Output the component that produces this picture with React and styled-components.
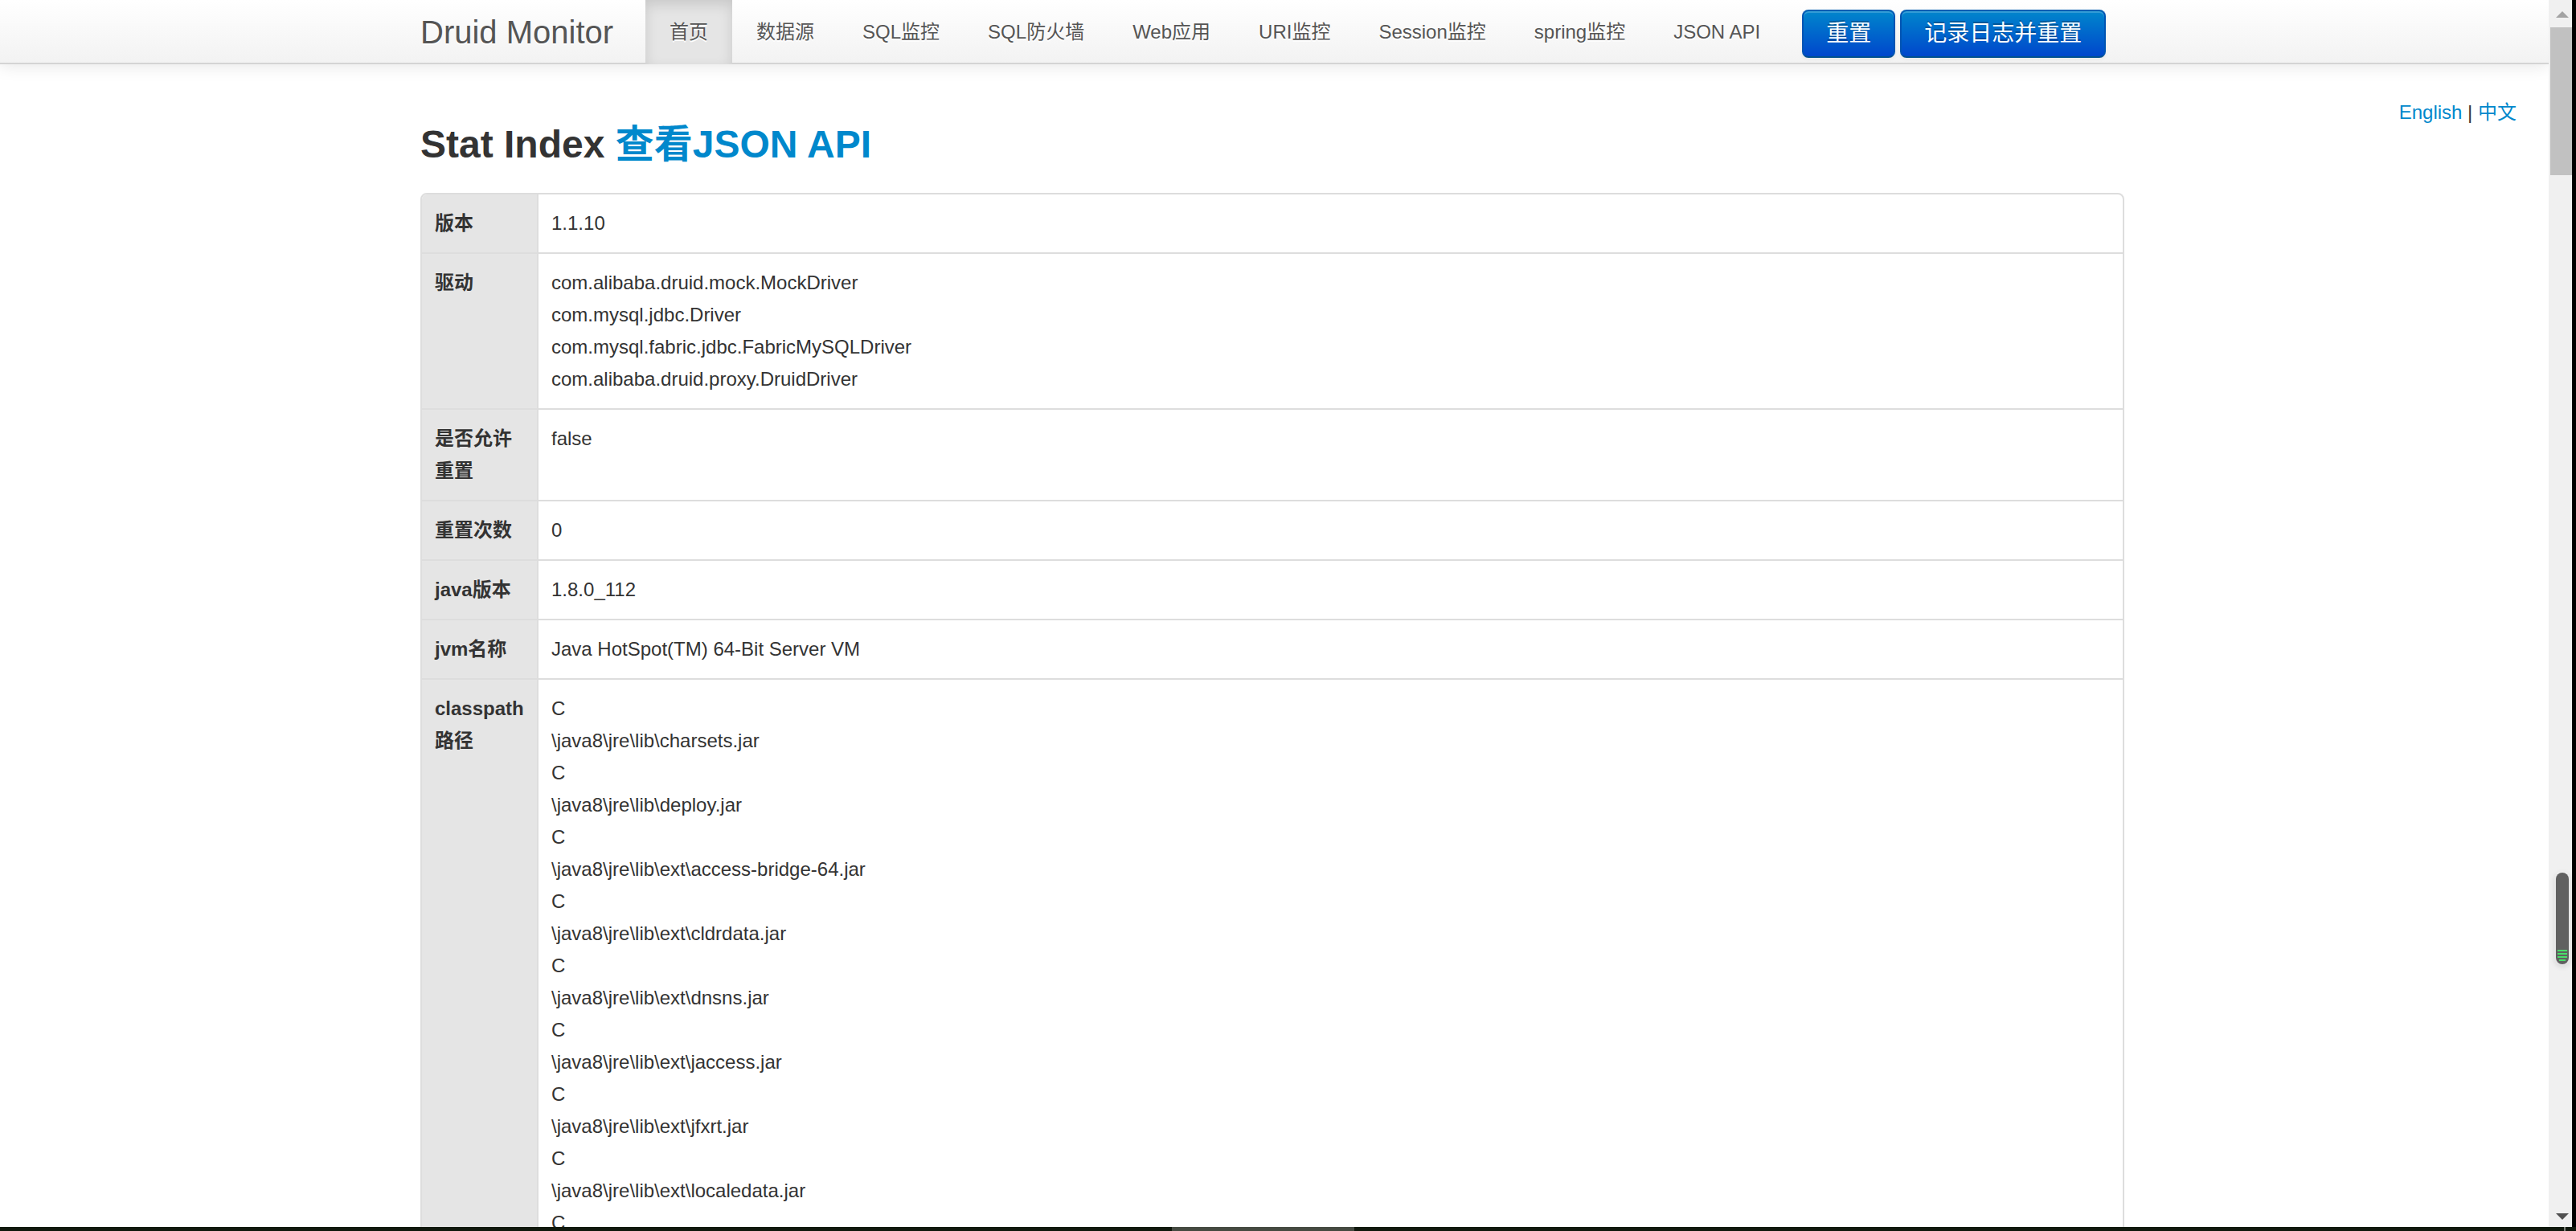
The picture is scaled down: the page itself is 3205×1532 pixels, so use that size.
import React from 'react';
import styled, { createGlobalStyle } from 'styled-components';

const GlobalStyle = createGlobalStyle`
  *, *::before, *::after { box-sizing: border-box; }
  body {
    margin: 0;
    background: #fff;
    color: #333;
    font-family: "Liberation Sans", "Noto Sans CJK SC", sans-serif;
    font-size: 24px;
    line-height: 40px;
  }
`;

const Screen = styled.div`
  display: grid;
  grid-template-columns: minmax(0, 1fr) 29px 5px;
  grid-template-rows: minmax(0, 1fr) 5px;
  height: 100vh;
  overflow: hidden;
  background: #000;
`;

const Page = styled.div`
  background: #fff;
  overflow: hidden;
`;

const Navbar = styled.header`
  position: relative;
  height: 80px;
  padding-right: 5px;
  background: linear-gradient(to bottom, #fff, #f2f2f2) border-box;
  border-bottom: 2px solid #d4d4d4;
  box-shadow: 0 2px 20px rgba(0, 0, 0, 0.1);
`;

const Container = styled.div`
  max-width: 2120px;
  margin: 0 auto;
`;

const NavRow = styled(Container)`
  display: flex;
  align-items: flex-start;
  white-space: nowrap;
`;

const Brand = styled.a`
  padding: 20px 40px 20px 0;
  font-size: 40px;
  color: #555;
  text-decoration: none;
  text-shadow: 0 2px 0 #fff;
`;

const NavList = styled.ul`
  display: flex;
  margin: 0;
  padding: 0;
  list-style: none;
`;

const NavLink = styled.a`
  display: block;
  padding: 20px 30px;
  color: #555;
  text-decoration: none;
  text-shadow: 0 2px 0 #fff;
  background: ${(p) => (p.$active ? '#e5e5e5' : 'transparent')};
  box-shadow: ${(p) => (p.$active ? 'inset 0 6px 16px rgba(0, 0, 0, 0.125)' : 'none')};
`;

const Actions = styled.div`
  display: flex;
  gap: 6px;
  padding: 12px 0 0 22px;
`;

const PrimaryButton = styled.button`
  height: 60px;
  padding: 0 28px;
  border: 2px solid;
  border-color: #005fb3 #0055b3 #00508f;
  border-radius: 8px;
  background: linear-gradient(to bottom, #08c, #04c) border-box;
  box-shadow: inset 0 2px 0 rgba(255, 255, 255, 0.2), 0 2px 4px rgba(0, 0, 0, 0.05);
  color: #fff;
  font: inherit;
  font-size: 28px;
  text-shadow: 0 -2px 0 rgba(0, 0, 0, 0.25);
`;

const Languages = styled.div`
  float: right;
  margin: 40px 40px 0 0;
`;

const Link = styled.a`
  color: #08c;
  text-decoration: none;
`;

const Main = styled.main`
  padding: 60px 5px 0 0;
`;

const Title = styled.h3`
  margin: 0 0 20px;
  font-size: 48px;
  line-height: 80px;
`;

const StatTable = styled.table`
  width: 100%;
  table-layout: fixed;
  border: 2px solid #ddd;
  border-radius: 8px;
  border-collapse: separate;
  border-spacing: 0;
  overflow: hidden;

  tr + tr > * {
    border-top: 2px solid #ddd;
  }
`;

const Label = styled.th`
  width: 143px;
  padding: 16px;
  background: #e5e5e5;
  text-align: left;
  vertical-align: top;
`;

const Value = styled.td`
  padding: 16px;
  border-left: 2px solid #ddd;
  vertical-align: top;
`;

const Line = styled.div``;

const Scrollbar = styled.aside`
  position: relative;
  display: flex;
  flex-direction: column;
  align-items: flex-end;
  justify-content: space-between;
  background: #f0f0f0;
`;

const ScrollArrow = styled.svg`
  display: block;
  width: 16px;
  height: 8px;
  margin: ${(p) => (p.$down ? '0 4px 9px' : '14px 4px 12px')};
  fill: ${(p) => (p.$down ? '#505050' : '#a3a3a3')};
`;

const Thumb = styled.div`
  width: 27px;
  height: 184px;
  margin-bottom: auto;
  background: #c1c1c1;
`;

const Gauge = styled.div`
  position: absolute;
  right: 4px;
  bottom: 327px;
  display: flex;
  flex-direction: column;
  justify-content: flex-end;
  align-items: center;
  gap: 2px;
  width: 16px;
  height: 114px;
  padding-bottom: 4px;
  border-radius: 8px;
  background: #606060;
  box-shadow: 0 2px 6px 2px rgba(0, 0, 0, 0.1), 0 0 0 2px #f6f6f6;
`;

const GaugeBar = styled.span`
  width: ${(p) => (p.$short ? 8 : 12)}px;
  height: 2px;
  background: #4ade6a;
`;

const Edge = styled.div`
  background: #000;
`;

const Taskbar = styled.footer`
  grid-column: 1 / -1;
  display: grid;
  grid-template-columns: 1458fr 227fr 1505fr 2px 13px;
  background: #10180d;
`;

const TaskbarItem = styled.span`
  grid-column: ${(p) => p.$column};
  background: ${(p) => p.$tone};
`;

const navItems = [
  '首页', '数据源', 'SQL监控', 'SQL防火墙', 'Web应用',
  'URI监控', 'Session监控', 'spring监控', 'JSON API',
];

const jars = [
  'charsets.jar', 'deploy.jar', 'ext\\access-bridge-64.jar', 'ext\\cldrdata.jar',
  'ext\\dnsns.jar', 'ext\\jaccess.jar', 'ext\\jfxrt.jar', 'ext\\localedata.jar',
];

const stats = [
  ['版本', ['1.1.10']],
  ['驱动', [
    'com.alibaba.druid.mock.MockDriver',
    'com.mysql.jdbc.Driver',
    'com.mysql.fabric.jdbc.FabricMySQLDriver',
    'com.alibaba.druid.proxy.DruidDriver',
  ]],
  ['是否允许重置', ['false']],
  ['重置次数', ['0']],
  ['java版本', ['1.8.0_112']],
  ['jvm名称', ['Java HotSpot(TM) 64-Bit Server VM']],
  ['classpath路径', [...jars.flatMap((jar) => ['C', `\\java8\\jre\\lib\\${jar}`]), 'C']],
];

export default function App() {
  return (
    <>
      <GlobalStyle />
      <Screen>
        <Page>
          <Navbar>
            <NavRow>
              <Brand href="#">Druid Monitor</Brand>
              <nav>
                <NavList>
                  {navItems.map((item, i) => (
                    <li key={item}>
                      <NavLink href="#" $active={i === 0}>{item}</NavLink>
                    </li>
                  ))}
                </NavList>
              </nav>
              <Actions>
                <PrimaryButton type="button">重置</PrimaryButton>
                <PrimaryButton type="button">记录日志并重置</PrimaryButton>
              </Actions>
            </NavRow>
          </Navbar>
          <Languages>
            <Link href="#">English</Link> | <Link href="#">中文</Link>
          </Languages>
          <Main>
            <Container>
              <Title>
                Stat Index <Link href="#">查看JSON API</Link>
              </Title>
              <StatTable>
                <tbody>
                  {stats.map(([label, lines]) => (
                    <tr key={label}>
                      <Label scope="row">{label}</Label>
                      <Value>
                        {lines.map((line, i) => <Line key={i}>{line}</Line>)}
                      </Value>
                    </tr>
                  ))}
                </tbody>
              </StatTable>
            </Container>
          </Main>
        </Page>
        <Scrollbar>
          <ScrollArrow viewBox="0 0 16 8"><path d="M0 8L8 0L16 8Z" /></ScrollArrow>
          <Thumb />
          <Gauge>
            <GaugeBar />
            <GaugeBar />
            <GaugeBar />
            <GaugeBar $short />
          </Gauge>
          <ScrollArrow $down viewBox="0 0 16 8"><path d="M0 0H16L8 8Z" /></ScrollArrow>
        </Scrollbar>
        <Edge />
        <Taskbar>
          <TaskbarItem $column={2} $tone="#454a41" />
          <TaskbarItem $column={4} $tone="#7d827a" />
        </Taskbar>
      </Screen>
    </>
  );
}
